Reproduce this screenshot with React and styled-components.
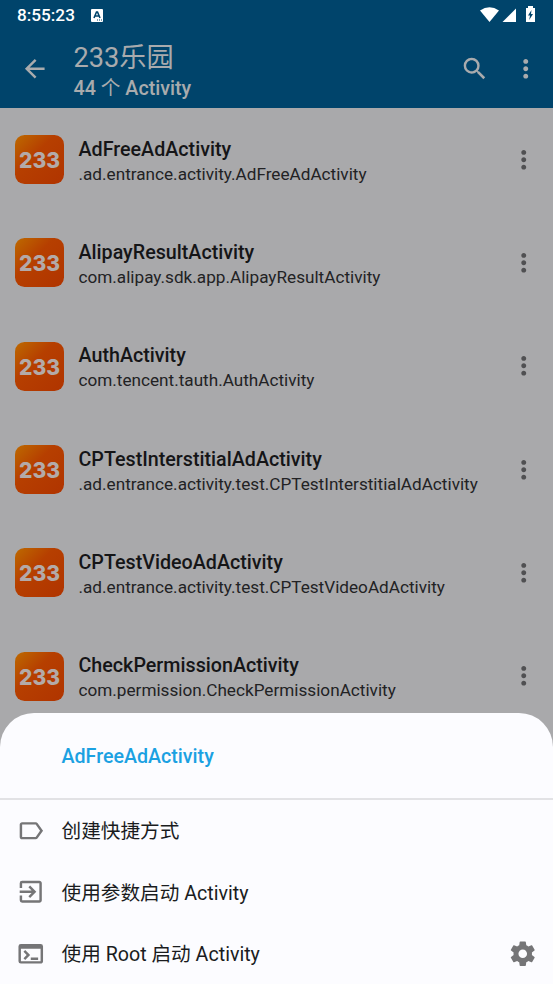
import React from "react";
import styled, { createGlobalStyle } from "styled-components";

const GlobalStyle = createGlobalStyle`
    * {
        box-sizing: border-box;
    }
    body {
        margin: 0;
        font-family: Roboto, "Noto Sans CJK SC", sans-serif;
        background: #a9a9ab;
    }
`;

const Screen = styled.div`
    position: relative;
    width: 553px;
    height: 984px;
    overflow: hidden;
    background: #a9a9ab;
`;

const Header = styled.header`
    height: 108px;
    background: #00446b;
`;

const StatusBar = styled.div`
    display: flex;
    align-items: center;
    height: 30px;
    padding: 0 17px;
    color: #ffffff;
`;

const Clock = styled.span`
    width: 74px;
    font-size: 17.2px;
    font-weight: 500;
    line-height: 20px;
`;

const StatusIcons = styled.div`
    display: flex;
    margin-left: auto;
`;

const Toolbar = styled.div`
    display: flex;
    align-items: center;
    height: 78px;
    padding: 0 12.5px 0 19.5px;
    color: #a9abad;
`;

const Titles = styled.div`
    flex: 1;
    padding: 6px 0 0 24.5px;
`;

const AppName = styled.h1`
    margin: 0;
    font-size: 27.2px;
    font-weight: 400;
    line-height: 33px;
`;

const Count = styled.p`
    margin: 0;
    font-size: 19.7px;
    font-weight: 500;
    line-height: 28px;

    span {
        font-weight: 400;
    }
`;

const IconButton = styled.button`
    display: flex;
    margin: 0 0 0 ${(props) => props.$gap || 0}px;
    padding: 0;
    border: none;
    background: transparent;
    color: ${(props) => props.$color || "inherit"};
`;

const List = styled.ul`
    margin: 0;
    padding: 0;
    list-style: none;
`;

const Row = styled.li`
    display: flex;
    align-items: center;
    height: 103.3px;
    padding: 0 15px;
`;

const RowText = styled.div`
    flex: 1;
    padding: 3px 0 0 14.5px;
    white-space: nowrap;
`;

const RowTitle = styled.div`
    color: #151517;
    font-size: 19.7px;
    font-weight: 500;
    line-height: 25px;
`;

const RowPath = styled.div`
    color: #222224;
    font-size: 17.16px;
    line-height: 24px;
`;

const Sheet = styled.section`
    position: absolute;
    right: 0;
    bottom: 0;
    left: 0;
    height: 271px;
    border-radius: 34px 34px 0 0;
    background: #fcfcff;
`;

const SheetTitle = styled.h2`
    height: 87px;
    margin: 0;
    padding-left: 61.5px;
    border-bottom: 2px solid #e2e2e5;
    color: #1ba1e2;
    font-size: 19.65px;
    font-weight: 500;
    line-height: 88px;
`;

const Action = styled.div`
    display: flex;
    align-items: center;
    height: 61.4px;
    padding: 0 16px;
    color: #757577;
`;

const ActionLabel = styled.span`
    flex: 1;
    padding: 0 0 2px 16px;
    color: #1a1c1e;
    font-size: 19.65px;
`;

const icons = {
    back: "M20 11H7.83l5.59-5.59L12 4l-8 8 8 8 1.41-1.41L7.83 13H20v-2z",
    search: "M15.5 14h-.79l-.28-.27A6.47 6.47 0 0 0 16 9.5 6.5 6.5 0 1 0 9.5 16c1.61 0 3.09-.59 4.23-1.57l.27.28v.79l5 4.99L20.49 19l-4.99-5zm-6 0C7.01 14 5 11.99 5 9.5S7.01 5 9.5 5 14 7.01 14 9.5 11.99 14 9.5 14z",
    more: "M12 8c1.1 0 2-.9 2-2s-.9-2-2-2-2 .9-2 2 .9 2 2 2zm0 2c-1.1 0-2 .9-2 2s.9 2 2 2 2-.9 2-2-.9-2-2-2zm0 6c-1.1 0-2 .9-2 2s.9 2 2 2 2-.9 2-2-.9-2-2-2z",
    label: "M17.63 5.84C17.27 5.33 16.67 5 16 5L5 5.01C3.9 5.01 3 5.9 3 7v10c0 1.1.9 1.99 2 1.99L16 19c.67 0 1.27-.33 1.63-.84L22 12l-4.37-6.16zM16 17H5V7h11l3.55 5L16 17z",
    launch: "M10.09 15.59L11.5 17l5-5-5-5-1.41 1.41L12.67 11H3v2h9.67l-2.58 2.59zM19 3H5a2 2 0 0 0-2 2v4h2V5h14v14H5v-4H3v4a2 2 0 0 0 2 2h14c1.1 0 2-.9 2-2V5c0-1.1-.9-2-2-2z",
    terminal: "M20 4H4a2 2 0 0 0-2 2v12a2 2 0 0 0 2 2h16c1.1 0 2-.9 2-2V6a2 2 0 0 0-2-2zm0 14H4V8h16v10zm-2-1h-6v-2h6v2zM7.5 17l-1.41-1.41L8.67 13l-2.59-2.59L7.5 9l4 4-4 4z",
    settings: "M19.43 12.98c.04-.32.07-.64.07-.98s-.03-.66-.07-.98l2.11-1.65c.19-.15.24-.42.12-.64l-2-3.46c-.12-.22-.39-.3-.61-.22l-2.49 1c-.52-.4-1.08-.73-1.69-.98l-.38-2.65C14.46 2.18 14.25 2 14 2h-4c-.25 0-.46.18-.49.42l-.38 2.65c-.61.25-1.17.59-1.69.98l-2.49-1c-.23-.09-.49 0-.61.22l-2 3.46c-.13.22-.07.49.12.64l2.11 1.65c-.04.32-.07.65-.07.98s.03.66.07.98l-2.11 1.65c-.19.15-.24.42-.12.64l2 3.46c.12.22.39.3.61.22l2.49-1c.52.4 1.08.73 1.69.98l.38 2.65c.03.24.24.42.49.42h4c.25 0 .46-.18.49-.42l.38-2.65c.61-.25 1.17-.59 1.69-.98l2.49 1c.23.09.49 0 .61-.22l2-3.46c.12-.22.07-.49-.12-.64l-2.11-1.65zM12 15.5c-1.93 0-3.5-1.57-3.5-3.5s1.57-3.5 3.5-3.5 3.5 1.57 3.5 3.5-1.57 3.5-3.5 3.5z",
};

function Icon({ name, size = 29.5 }) {
    return (
        <svg width={size} height={size} viewBox="0 0 24 24" fill="currentColor">
            <path d={icons[name]} />
        </svg>
    );
}

function AppLogo() {
    return (
        <svg width="49" height="49" viewBox="0 0 49 49">
            <defs>
                <linearGradient id="logo" x1="0" y1="0" x2="1" y2="1">
                    <stop offset="0" stopColor="#bd6a00" />
                    <stop offset="0.4" stopColor="#b63f00" />
                    <stop offset="1" stopColor="#b03400" />
                </linearGradient>
            </defs>
            <rect width="49" height="49" rx="9.5" fill="url(#logo)" />
            <text
                x="4"
                y="32.5"
                fontFamily="Inter, sans-serif"
                fontWeight="800"
                fontSize="21.5"
                textLength="41"
                lengthAdjust="spacingAndGlyphs"
                fill="#b3aaa8"
            >
                233
            </text>
        </svg>
    );
}

function KeyboardIcon() {
    return (
        <svg width="12" height="13" viewBox="0 0 12 13">
            <rect width="12" height="13" rx="1" fill="#ffffff" />
            <path d="M3 9 5.5 3h1L9 9M4 7h4" fill="none" stroke="#00446b" strokeWidth="1.6" />
            <path d="M6 11h1M8 11h1M10 11h1" stroke="#00446b" />
        </svg>
    );
}

function SystemIcons() {
    return (
        <svg width="56" height="18" viewBox="0 0 56 18" fill="#ffffff">
            <path d="M0 4.5Q9.5-1.8 19 4.5L9.5 16z" />
            <path d="M22.5 16 36 2.5V16z" />
            <path d="M46 2h2V0h5v2h2v14h-9z" />
            <path d="M51.5 4 48 9.5h2L49.2 14 53 8h-2z" fill="#00446b" />
        </svg>
    );
}

const activities = [
    { name: "AdFreeAdActivity", path: ".ad.entrance.activity.AdFreeAdActivity" },
    { name: "AlipayResultActivity", path: "com.alipay.sdk.app.AlipayResultActivity" },
    { name: "AuthActivity", path: "com.tencent.tauth.AuthActivity" },
    { name: "CPTestInterstitialAdActivity", path: ".ad.entrance.activity.test.CPTestInterstitialAdActivity" },
    { name: "CPTestVideoAdActivity", path: ".ad.entrance.activity.test.CPTestVideoAdActivity" },
    { name: "CheckPermissionActivity", path: "com.permission.CheckPermissionActivity" },
];

function App() {
    return (
        <Screen>
            <GlobalStyle />
            <Header>
                <StatusBar>
                    <Clock>8:55:23</Clock>
                    <KeyboardIcon />
                    <StatusIcons>
                        <SystemIcons />
                    </StatusIcons>
                </StatusBar>
                <Toolbar>
                    <IconButton><Icon name="back" /></IconButton>
                    <Titles>
                        <AppName>233乐园</AppName>
                        <Count>44 <span>个</span> Activity</Count>
                    </Titles>
                    <IconButton><Icon name="search" /></IconButton>
                    <IconButton $gap={22}><Icon name="more" /></IconButton>
                </Toolbar>
            </Header>

            <List>
                {activities.map((item) => (
                    <Row key={item.name}>
                        <AppLogo />
                        <RowText>
                            <RowTitle>{item.name}</RowTitle>
                            <RowPath>{item.path}</RowPath>
                        </RowText>
                        <IconButton $color="#505052"><Icon name="more" /></IconButton>
                    </Row>
                ))}
            </List>

            <Sheet>
                <SheetTitle>AdFreeAdActivity</SheetTitle>
                <Action>
                    <Icon name="label" />
                    <ActionLabel>创建快捷方式</ActionLabel>
                </Action>
                <Action>
                    <Icon name="launch" />
                    <ActionLabel>使用参数启动 Activity</ActionLabel>
                </Action>
                <Action>
                    <Icon name="terminal" />
                    <ActionLabel>使用 Root 启动 Activity</ActionLabel>
                    <IconButton><Icon name="settings" /></IconButton>
                </Action>
            </Sheet>
        </Screen>
    );
}

export default App;
